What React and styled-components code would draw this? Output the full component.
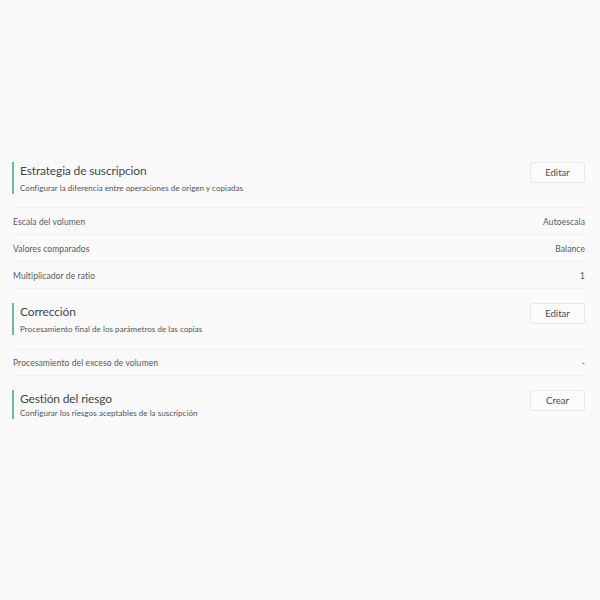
import React from "react";
import styled, { createGlobalStyle } from "styled-components";

const GlobalStyle = createGlobalStyle`
  html, body {
    margin: 0;
    padding: 0;
    background: #fafafa;
  }
  * {
    box-sizing: border-box;
  }
`;

const Page = styled.div`
  width: 600px;
  height: 600px;
  padding: 162px 15px 0 12px;
  font-family: "Lato", "Open Sans", sans-serif;
  color: #4a4d50;
`;

const Header = styled.div`
  display: flex;
  justify-content: space-between;
  align-items: flex-start;
  margin-bottom: ${(props) => props.gap}px;
`;

const HeaderText = styled.div`
  border-left: 2px solid #6cc08f;
  padding-left: 6px;
  height: ${(props) => props.size}px;
`;

const Title = styled.h2`
  margin: 0;
  font-size: 12px;
  line-height: 18px;
  font-weight: 400;
  letter-spacing: -0.15px;
  color: #44474a;
`;

const Subtitle = styled.p`
  margin: ${(props) => props.top}px 0 0;
  font-size: 8px;
  line-height: 11px;
  letter-spacing: 0.05px;
  color: #505356;
`;

const ActionButton = styled.button`
  width: 55px;
  height: 21px;
  padding: 0;
  background: #fbfbfb;
  border: 1px solid #e8e8e8;
  border-radius: 2px;
  font-family: inherit;
  font-size: 9.5px;
  color: #4a4d50;
`;

const Rows = styled.div`
  border-top: 1px solid #f0f0f0;
  margin-bottom: 14px;
`;

const Row = styled.div`
  display: flex;
  justify-content: space-between;
  align-items: center;
  height: ${(props) => props.size}px;
  padding: 1px 0 0 1px;
  border-bottom: 1px solid #f0f0f0;
  font-size: 8.5px;
  letter-spacing: 0.1px;
  color: #55585b;
`;

const sections = [
  {
    title: "Estrategia de suscripcion",
    subtitle: "Configurar la diferencia entre operaciones de origen y copiadas",
    action: "Editar",
    size: 32,
    top: 3,
    gap: 13,
    rowSize: 27,
    rows: [
      ["Escala del volumen", "Autoescala"],
      ["Valores comparados", "Balance"],
      ["Multiplicador de ratio", "1"],
    ],
  },
  {
    title: "Corrección",
    subtitle: "Procesamiento final de los parámetros de las copias",
    action: "Editar",
    size: 32,
    top: 3,
    gap: 14,
    rowSize: 26,
    rows: [["Procesamiento del exceso de volumen", "-"]],
  },
  {
    title: "Gestión del riesgo",
    subtitle: "Configurar los riesgos aceptables de la suscripción",
    action: "Crear",
    size: 29,
    top: 0,
    gap: 0,
    rowSize: 0,
    rows: [],
  },
];

export default function App() {
  return (
    <Page>
      <GlobalStyle />
      {sections.map((section) => (
        <section key={section.title}>
          <Header gap={section.gap}>
            <HeaderText size={section.size}>
              <Title>{section.title}</Title>
              <Subtitle top={section.top}>{section.subtitle}</Subtitle>
            </HeaderText>
            <ActionButton>{section.action}</ActionButton>
          </Header>
          {section.rows.length > 0 && (
            <Rows>
              {section.rows.map(([label, value]) => (
                <Row key={label} size={section.rowSize}>
                  <span>{label}</span>
                  <span>{value}</span>
                </Row>
              ))}
            </Rows>
          )}
        </section>
      ))}
    </Page>
  );
}
